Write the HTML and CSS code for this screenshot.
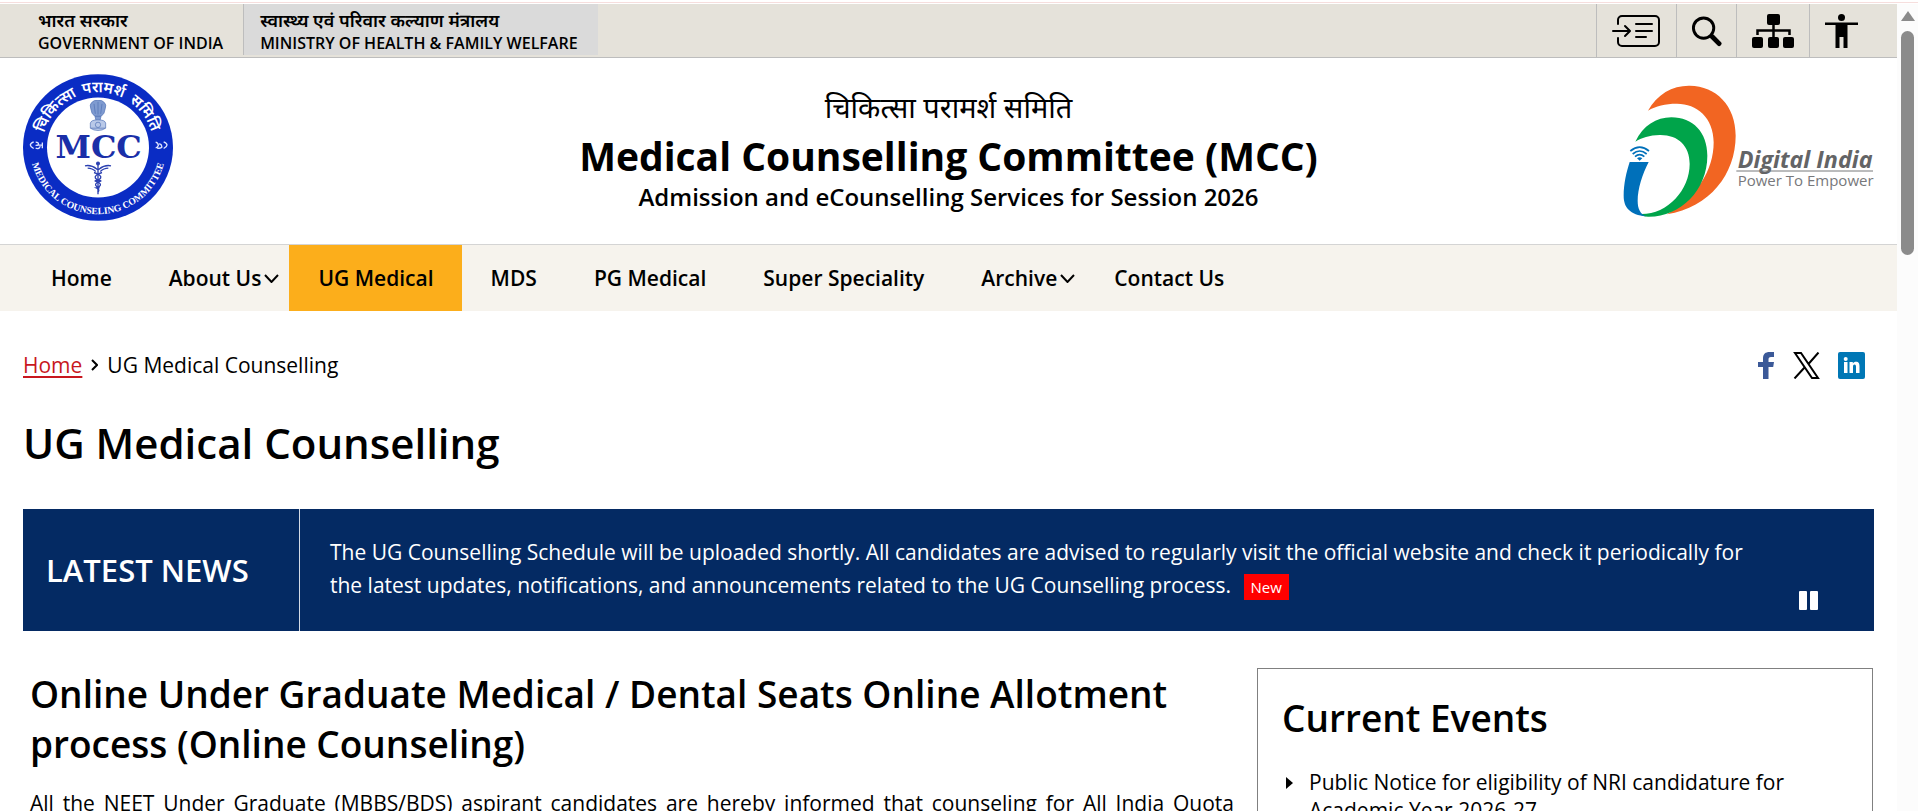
FILE: index.html
```html
<!DOCTYPE html>
<html lang="en">
<head>
  <meta charset="UTF-8" />
  <meta name="viewport" content="width=device-width, initial-scale=1" />
  <title>UG Medical Counselling | MCC</title>
  <link rel="stylesheet" href="styles.css">
</head>
<body>

<div class="page-edge"></div>
<div class="viewport">
  <div class="page">

    <div class="topbar">
      <a class="gov" href="#"><span class="hi" lang="hi">भारत सरकार</span><span>GOVERNMENT OF INDIA</span></a>
      <a class="gov ministry" href="#"><span class="hi" lang="hi">स्वास्थ्य एवं परिवार कल्याण मंत्रालय</span><span>MINISTRY OF HEALTH &amp; FAMILY WELFARE</span></a>
      <div class="tools">
        <a class="tool skip" href="#main" aria-label="Skip to main content">
          <svg width="48" height="32" viewBox="0 0 48 32" fill="none" stroke="#000" stroke-width="2" stroke-linecap="round" stroke-linejoin="round">
            <path d="M6 9V5a4 4 0 0 1 4-4h33a4 4 0 0 1 4 4v22a4 4 0 0 1-4 4H10a4 4 0 0 1-4-4v-4M1 16h16M13 11l5 5-5 5M24 9h16M24 16h16M24 22h10"/>
          </svg>
        </a>
        <button class="tool search" type="button" aria-label="Search">
          <svg width="31" height="32" viewBox="0 0 32 32" fill="none" stroke="#000" stroke-linecap="round">
            <circle cx="13" cy="13" r="10.500" stroke-width="3"/><path d="M22 22l7 7" stroke-width="5"/>
          </svg>
        </button>
        <a class="tool sitemap" href="#" aria-label="Site map">
          <svg width="42" height="34" viewBox="0 0 42 34">
            <rect x="15" y="0" width="13" height="11" rx="2"/><rect x="0" y="23" width="11" height="11" rx="2"/><rect x="16" y="23" width="11" height="11" rx="2"/><rect x="31" y="23" width="11" height="11" rx="2"/>
            <path d="M21.500 10v13M5.500 21v-4.500h32V21" fill="none" stroke="#000" stroke-width="2.500"/>
          </svg>
        </a>
        <button class="tool access" type="button" aria-label="Accessibility">
          <svg width="33" height="34" viewBox="0 0 33 34">
            <circle cx="16.500" cy="3.500" r="3.500"/><path d="M0 8.500h33v2.500H22.500v23h-4V23h-4v11h-4V11H0z"/>
          </svg>
        </button>
      </div>
    </div>

    <header class="header">
      <a href="#" class="seal" aria-label="Medical Counselling Committee">
        <svg width="150" height="147" viewBox="70 43 450 440">
          <defs>
            <path id="ringTop" d="M129 263A166 166 0 0 1 461 263"/>
            <path id="ringBottom" d="M90 258A205 205 0 0 0 500 258"/>
          </defs>
          <ellipse cx="295" cy="263" rx="225" ry="220" fill="#0a2cc4"/>
          <ellipse cx="295" cy="263" rx="153" ry="150" fill="#fff"/>
          <g class="ring-hi" text-anchor="middle">
            <text><textPath href="#ringTop" startOffset="23%">चिकित्सा</textPath></text>
            <text><textPath href="#ringTop" startOffset="53%">परामर्श</textPath></text>
            <text><textPath href="#ringTop" startOffset="80%">समिति</textPath></text>
          </g>
          <text class="ring-en" text-anchor="middle"><textPath href="#ringBottom" startOffset="50%">MEDICAL COUNSELING COMMITTEE</textPath></text>
          <g fill="none" stroke="#dfe5ff" stroke-width="4">
            <path d="M102 246q-20 9 0 20M108 247q10 0 8 8q-6 3-8 0M128 248v17M116 256h12M108 265q10 4 14-6"/>
            <path d="M492 246q20 9 0 20M468 247q8 2 8 10q-4 8-8 6M478 252q8 0 8 8M472 264q10 4 16-4"/>
          </g>
          <!-- lion capital -->
          <g fill="#7f9bd0" stroke="#4e6fb4" stroke-width="2">
            <path d="M276 128q8-9 19-6q11-3 19 6q7 7 3 17l-4 15-8 9h-20l-8-9-4-15q-4-10 3-17z"/>
            <path d="M286 170h18l-3 12h-12z"/>
            <path d="M272 190q2-10 23-10t23 10v15q-10 7-23 7t-23-7z" fill="#b9c9e8"/>
            <circle cx="295" cy="195" r="8" fill="none"/>
            <path d="M283 132l4 30M295 126v38M307 132l-4 30M273 205h44" fill="none"/>
          </g>
          <text class="seal-name" x="297" y="296" text-anchor="middle">MCC</text>
          <!-- caduceus -->
          <g fill="none" stroke="#2a3fb0" stroke-width="4">
            <path d="M295 308v95M256 318q18-4 36 10q3-2 6 0q18-14 36-10M264 325q14 0 24 10M326 325q-14 0-24 10"/>
            <path d="M283 338q24 8 20 16t-18 9q20 6 17 13t-12 8q12 5 5 12M307 338q-24 8-20 16t18 9q-20 6-17 13t12 8"/>
            <circle cx="295" cy="311" r="4" fill="#2a3fb0"/>
          </g>
        </svg>
      </a>
      <div class="site-title">
        <p class="title-hi" lang="hi">चिकित्सा परामर्श समिति</p>
        <p class="title-en">Medical Counselling Committee (MCC)</p>
        <p class="title-sub">Admission and eCounselling Services for Session 2026</p>
      </div>
      <a href="#" class="digital" aria-label="Digital India">
        <svg width="251" height="134" viewBox="130 250 753 402">
          <path fill="#f26522" d="M205 330C232 280 280 254 330 255C410 256 468 315 468 405C468 520 390 620 262 641C350 590 402 510 402 425C402 350 350 308 290 309C258 309 228 316 205 330z"/>
          <path fill="#00a44a" d="M167 423C190 375 230 350 275 350C340 350 383 395 383 465C383 570 300 650 205 648C195 648 185 645 178 640C260 645 330 570 330 490C330 435 295 402 240 403C210 404 185 411 167 423z"/>
          <path fill="#0070ba" d="M150 484H207C188 520 174 565 174 600C174 625 182 640 200 647C150 642 132 620 132 585C132 550 140 515 150 484z"/>
          <g fill="none" stroke="#0070ba" stroke-width="5">
            <path d="M152 451Q180 428 208 451M159 460Q180 442 201 460M166 468Q180 456 194 468"/>
          </g>
          <path fill="#0070ba" d="M172 473Q180 467 188 473L180 480z"/>
          <text class="di-name" x="474" y="502">Digital India</text>
          <path d="M470 511H880" stroke="#77787b" stroke-width="3"/>
          <text class="di-tag" x="474" y="557">Power To Empower</text>
        </svg>
      </a>
    </header>

    <nav class="nav">
      <a href="#">Home</a>
      <a href="#" class="has-menu">About Us<svg class="caret" width="15" height="9" viewBox="0 0 15 9"><path d="M1 1l6.500 7L14 1"/></svg></a>
      <a href="#" class="active">UG Medical</a>
      <a href="#">MDS</a>
      <a href="#">PG Medical</a>
      <a href="#">Super Speciality</a>
      <a href="#" class="has-menu">Archive<svg class="caret" width="15" height="9" viewBox="0 0 15 9"><path d="M1 1l6.500 7L14 1"/></svg></a>
      <a href="#">Contact Us</a>
    </nav>

    <main class="main" id="main">
      <div class="crumb-row">
        <div class="crumbs">
          <a href="#">Home</a>
          <svg width="7" height="12" viewBox="0 0 7 12"><path d="M1 1l5 5-5 5"/></svg>
          <span>UG Medical Counselling</span>
        </div>
        <div class="share">
          <a href="#" aria-label="Facebook"><svg width="17" height="27" viewBox="0 0 17 27"><path fill="#3b5998" d="M5 27V15H0v-5h5V6.500C5 2 7.500 0 11.500 0H16v5h-3c-2 0-2.500 1-2.500 2.500V10H16l-.8 5h-4.700v12z"/></svg></a>
          <a href="#" aria-label="X"><svg width="27" height="27" viewBox="0 0 27 27"><path fill="none" stroke="#000" stroke-width="2" d="M2 1h6l17 25h-6zM25.500 .5L15 12.500M12 15L1.500 26.500"/></svg></a>
          <a href="#" aria-label="LinkedIn"><svg width="27" height="27" viewBox="0 0 27 27"><rect width="27" height="27" rx="2" fill="#0077b5"/><path fill="#fff" d="M6 10h3.500v11H6zM11.500 10h3.300v1.500c.7-1.200 1.900-1.800 3.200-1.800 2.800 0 3.500 2 3.500 4.500V21H18v-6c0-1.400-.3-2.500-1.500-2.500S15 13.500 15 15v6h-3.500z"/><circle cx="7.700" cy="7" r="2" fill="#fff"/></svg></a>
        </div>
      </div>

      <h1>UG Medical Counselling</h1>

      <section class="news">
        <h2 class="news-label">LATEST NEWS</h2>
        <p class="news-text">The UG Counselling Schedule will be uploaded shortly. All candidates are advised to regularly visit the official website and check it periodically for the latest updates, notifications, and announcements related to the UG Counselling process. <span class="badge">New</span></p>
        <button class="pause" type="button" aria-label="Pause">
          <svg width="19" height="19" viewBox="0 0 19 19" fill="#fff"><rect width="8" height="19" rx="1"/><rect x="11" width="8" height="19" rx="1"/></svg>
        </button>
      </section>

      <div class="columns">
        <article class="article">
          <h2>Online Under Graduate Medical / Dental Seats Online Allotment process (Online Counseling)</h2>
          <p>All the NEET Under Graduate (MBBS/BDS) aspirant candidates are hereby informed that counseling for All India Quota</p>
        </article>
        <aside class="events">
          <h2>Current Events</h2>
          <ul>
            <li><a href="#">Public Notice for eligibility of NRI candidature for Academic Year 2026-27</a></li>
          </ul>
        </aside>
      </div>
    </main>
  </div>

  <div class="scrollbar">
    <div class="scroll-up"></div>
    <div class="scroll-thumb"></div>
  </div>
</div>

</body>
</html>
```
FILE: styles.css
```css
* {
  box-sizing: border-box;
}
body {
  margin: 0;
  height: 100vh;
  overflow: hidden;
  display: flex;
  flex-direction: column;
  background: #fff;
  color: #000;
  font-family: "Open Sans", "Noto Sans Devanagari", "Noto Sans", sans-serif;
  font-size: 21px;
}
h1, h2, p, ul {
  margin: 0;
  padding: 0;
}
h1, h2 {
  font-weight: 600;
}
a {
  color: inherit;
  text-decoration: none;
}
button {
  border: 0;
  padding: 0;
  background: none;
}
svg {
  display: block;
}
.page-edge {
  flex: none;
  height: 4px;
  border-top: 2px solid #fff;
  background: #f6dedd;
  border-bottom: 1px solid #fff;
}
.viewport {
  flex: 1;
  min-height: 0;
  display: flex;
}
.page {
  flex: 1;
  min-width: 0;
  overflow: hidden;
}

/* top bar */
.topbar {
  display: flex;
  height: 54px;
  padding-left: 22px;
  background: #e5e2da;
  border-bottom: 1px solid #bdbdbd;
}
.gov {
  display: flex;
  flex-direction: column;
  height: 51px;
  padding: 5px 20px 0 16px;
  font-size: 16px;
  font-weight: 600;
  line-height: 23px;
}
.gov .hi {
  font-size: 18px;
}
.ministry {
  background: #dadada;
  border-left: 1px solid #bdbdbd;
}
.tools {
  display: flex;
  margin-left: auto;
}
.tool {
  display: flex;
  align-items: center;
  padding: 0 15px;
  border-left: 1px solid #bdbdbd;
}
.tool.skip {
  padding-right: 16px;
}
.tool.search {
  padding: 0 14px;
}
.tool.access {
  padding-right: 39px;
}

/* header */
.header {
  display: grid;
  grid-template-columns: 1fr auto 1fr;
  align-items: start;
  height: 187px;
  padding: 16px 23px 0;
  border-bottom: 1px solid #d4d4d4;
}
.site-title {
  padding-top: 13px;
  text-align: center;
}
.title-hi {
  font-size: 29px;
  line-height: 40px;
}
.title-en {
  font-size: 39px;
  line-height: 58px;
  font-weight: 700;
}
.title-sub {
  font-size: 24px;
  line-height: 24px;
  font-weight: 600;
}
.digital {
  justify-self: end;
  padding-top: 10px;
}
.ring-hi {
  font-size: 46px;
  font-weight: 600;
  fill: #fff;
}
.ring-en {
  font-family: "Liberation Serif", serif;
  font-size: 29px;
  font-weight: 700;
  fill: #fff;
}
.seal-name {
  font-family: "DejaVu Serif", serif;
  font-size: 96px;
  font-weight: 700;
  fill: #1a2fa8;
}
.di-name {
  font-size: 70px;
  font-weight: 700;
  font-style: italic;
  fill: #636466;
}
.di-tag {
  font-size: 45px;
  fill: #77787b;
}

/* navigation */
.nav {
  display: flex;
  height: 66px;
  padding-left: 22px;
  background: #f6f3ed;
  font-weight: 600;
  line-height: 66px;
}
.nav a {
  position: relative;
  padding: 0 28px 0 29px;
}
.nav .active {
  background: #fcae1b;
}
.caret {
  position: absolute;
  right: 10px;
  top: 29px;
  fill: none;
  stroke: #000;
  stroke-width: 2;
}

/* content */
.main {
  padding: 38px 23px 0;
}
.crumb-row {
  display: flex;
  justify-content: space-between;
  align-items: center;
  height: 32px;
}
.crumbs {
  display: flex;
  align-items: center;
  gap: 9px;
}
.crumbs a {
  color: #c8171e;
  text-decoration: underline;
  text-decoration-thickness: 2px;
  text-underline-offset: 3px;
}
.crumbs svg {
  fill: none;
  stroke: #000;
  stroke-width: 2;
}
.share {
  display: flex;
  gap: 18px;
  padding-right: 9px;
}
h1 {
  margin: 31px 0 35px;
  font-size: 42px;
  line-height: 62px;
}
.news {
  display: flex;
  height: 122px;
  background: #042a63;
  color: #fff;
}
.news-label {
  flex: none;
  width: 277px;
  padding-left: 23px;
  border-right: 1px solid #d5dbe5;
  font-size: 31px;
  line-height: 122px;
}
.news-text {
  flex: 1;
  padding: 27px 0 0 30px;
  line-height: 33px;
}
.badge {
  display: inline-block;
  margin-left: 7px;
  padding: 0 7px;
  background: #f00;
  font-size: 15px;
  line-height: 26px;
}
.pause {
  align-self: flex-end;
  margin: 0 56px 21px 30px;
}
.columns {
  display: grid;
  grid-template-columns: 2fr 1fr;
  padding-top: 37px;
}
.article {
  padding: 1px 23px 0 7px;
}
.article h2, .events h2 {
  font-size: 37px;
  line-height: 50px;
}
.article p {
  margin-top: 19px;
  line-height: 30px;
  text-align: justify;
  text-align-last: justify;
}
.events {
  margin-right: 1px;
  padding: 24px;
  border: 1px solid #808080;
}
.events ul {
  margin-top: 25px;
  list-style: none;
}
.events li {
  display: flex;
  gap: 16px;
  line-height: 28px;
}
.events li::before {
  content: "";
  flex: none;
  margin: 9px 0 0 4px;
  width: 0;
  height: 0;
  border: 6px solid transparent;
  border-left: 7px solid #000;
  border-right: 0;
}

/* window scrollbar */
.scrollbar {
  flex: none;
  display: flex;
  flex-direction: column;
  align-items: center;
  gap: 10px;
  width: 21px;
  padding-top: 7px;
  background: #fcfcfc;
}
.scroll-up {
  border: 7px solid transparent;
  border-top: 0;
  border-bottom: 10px solid #8b8b8b;
}
.scroll-thumb {
  width: 13px;
  height: 224px;
  border-radius: 7px;
  background: #8b8b8b;
}
```
